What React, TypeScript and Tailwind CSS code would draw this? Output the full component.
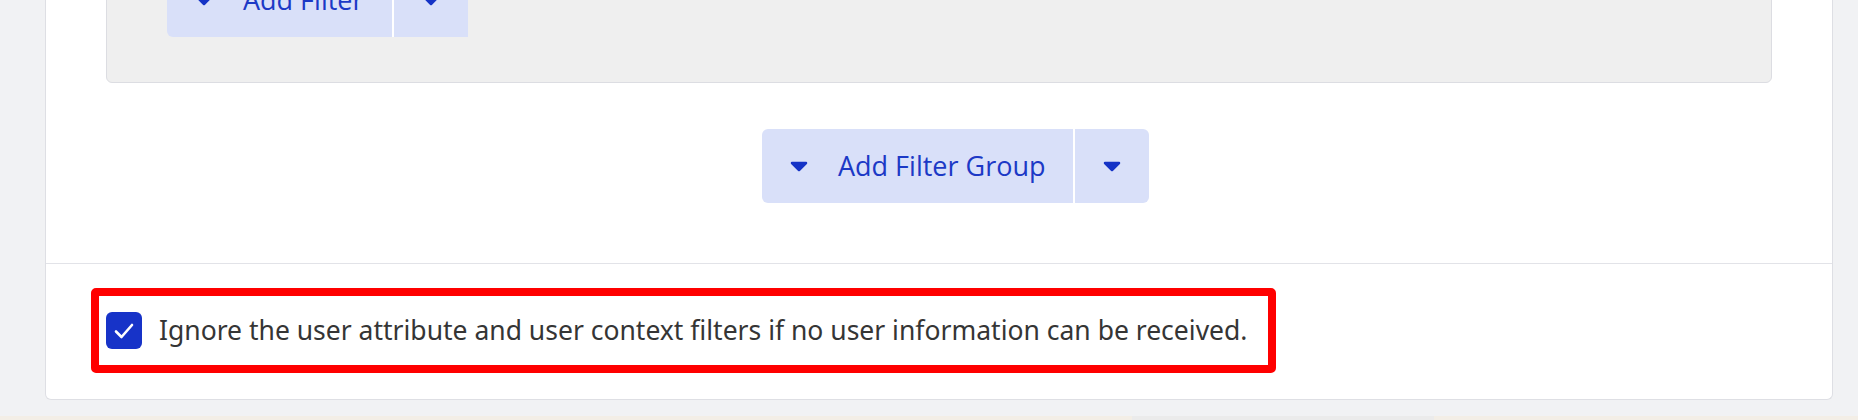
import React from "react";

function Caret() {
  return (
    <svg width="18" height="11" viewBox="0 0 18 11" className="block">
      <path
        d="M2 2 H16 L9 9 Z"
        fill="#1533c6"
        stroke="#1533c6"
        strokeWidth="2.5"
        strokeLinejoin="round"
      />
    </svg>
  );
}

function SplitButton({ label, mainWidth }: { label: string; mainWidth: string }) {
  return (
    <div className="flex h-[74px] rounded-[6px] overflow-hidden">
      <button
        className={`${mainWidth} h-full flex items-center pl-[28px] bg-[#d9e0f9] text-[#1c39c6] text-[27px] gap-[30px]`}
        style={{ fontFamily: '"Open Sans", sans-serif' }}
      >
        <Caret />
        <span className="whitespace-nowrap">{label}</span>
      </button>
      <div className="w-[2px] h-full bg-white" />
      <button className="w-[74px] h-full flex items-center justify-center bg-[#d9e0f9]">
        <Caret />
      </button>
    </div>
  );
}

export default function App() {
  return (
    <div className="relative h-[420px] overflow-hidden bg-[#f1f2f4]">
      <div className="ml-[45px] w-[1788px] -mt-[60px] bg-white border border-t-0 border-[#dedfe4] rounded-b-[6px]">
        <div className="px-[60px]">
          <div className="bg-[#efefef] border border-[#dcdde2] rounded-[6px] px-[60px] pt-[22px] pb-[45px]">
            <SplitButton label="Add Filter" mainWidth="w-[225px]" />
          </div>
          <div className="flex justify-center pl-[33px] pt-[46px] pb-[60px]">
            <SplitButton label="Add Filter Group" mainWidth="w-[311px]" />
          </div>
        </div>
        <div className="border-t border-[#e2e3e8] pl-[45px] pt-[24px] pb-[26px]">
          <div className="w-[1185px] h-[85px] border-[8px] border-[#ff0000] rounded-[5px] flex items-center pl-[7px] gap-[17px]">
            <div className="w-[36px] h-[37px] rounded-[6px] bg-[#1733c8] flex items-center justify-center shrink-0">
              <svg width="24" height="20" viewBox="0 0 24 20">
                <path
                  d="M4 10.5 L9.5 16 L20 4"
                  fill="none"
                  stroke="#ffffff"
                  strokeWidth="2.6"
                  strokeLinecap="round"
                  strokeLinejoin="round"
                />
              </svg>
            </div>
            <span
              className="whitespace-nowrap text-[26.5px] text-[#353535]"
              style={{ fontFamily: '"Noto Sans", sans-serif' }}
            >
              Ignore the user attribute and user context filters if no user information can be received.
            </span>
          </div>
        </div>
      </div>
      <div className="absolute left-0 right-0 bottom-0 h-[4px] flex">
        <div className="w-[1132px] bg-[#f3eee6]" />
        <div className="w-[302px] bg-[#ebebeb]" />
        <div className="flex-1 bg-[#f3eee6]" />
      </div>
    </div>
  );
}
